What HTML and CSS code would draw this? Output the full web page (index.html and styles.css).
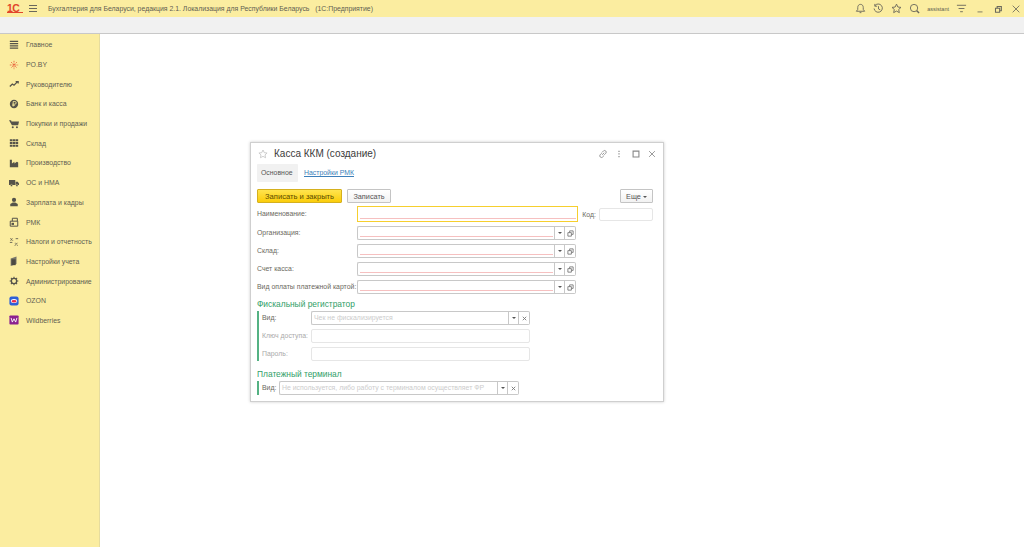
FILE: index.html
```html
<!DOCTYPE html>
<html lang="ru">
<head>
    <meta charset="UTF-8">
    <title>Бухгалтерия для Беларуси</title>
    <link rel="stylesheet" href="styles.css">
</head>
<body>
    <header class="topbar">
        <div class="logo">1С</div>
        <svg class="icon burger" viewBox="1 .5 8 7"><path d="M1 1h8M1 4h8M1 7h8"/></svg>
        <div class="app-title">Бухгалтерия для Беларуси, редакция 2.1. Локализация для Республики Беларусь&nbsp;&nbsp; (1С:Предприятие)</div>
        <div class="top-tools">
            <svg class="icon" viewBox="0 0 12 12"><path d="M6 1.5c-2 0-3 1.5-3 3.5v2l-1.500 2h9l-1.500-2v-2c0-2-1-3.500-3-3.500zM5 10.500h2"/></svg>
            <svg class="icon" viewBox="0 0 12 12"><path d="M2 3a4.500 4.500 0 1 1-.8 3M2 1v2.500h2.500M6 3.500v3l2 1"/></svg>
            <svg class="icon" viewBox="0 0 12 12"><path d="M6 1.200l1.500 3.200 3.400.4-2.500 2.300.7 3.400-3.100-1.700-3.100 1.700.7-3.400-2.500-2.300 3.400-.4z"/></svg>
            <svg class="icon" viewBox="0 0 12 12"><circle cx="5.500" cy="5.500" r="4"/><path d="M8.500 8.500l2.500 2.500" stroke-width="1.600"/></svg>
            <span class="user">assistant</span>
            <svg class="icon" viewBox="0 0 12 12"><path d="M1 2.500h10M2.800 6h6.400M4.500 9.500h3"/></svg>
            <svg class="icon small" viewBox="0 0 12 12"><path d="M3 9.500h6"/></svg>
            <svg class="icon small" viewBox="0 0 12 12"><path d="M3 5h5v5h-5zM5 5v-2h5v5h-2" stroke-width="1.300"/></svg>
            <svg class="icon small" viewBox="0 0 12 12"><path d="M2 2l8 8M10 2l-8 8"/></svg>
        </div>
    </header>
    <div class="toolbar"></div>

    <div class="layout">
        <nav class="sidebar">
            <a class="nav-item">
                <svg class="nav-icon" viewBox="0 0 12 12"><path d="M1 1h10v1.500h-10zM1 3.700h10v1.500h-10zM1 6.400h10v1.500h-10zM1 9.100h10v1.500h-10z" fill="#55534a"/></svg>
                Главное
            </a>
            <a class="nav-item">
                <svg class="nav-icon" viewBox="0 0 12 12"><path d="M6 1v10M1 6h10M2.500 2.500l7 7M9.500 2.500l-7 7" stroke="#e8613c" stroke-width="1" stroke-dasharray="2 1" fill="none"/></svg>
                PO.BY
            </a>
            <a class="nav-item">
                <svg class="nav-icon" viewBox="0 0 12 12"><path d="M1 9l3-3 2 1.500 4-4M8 3h3v2.500" stroke="#55534a" stroke-width="1.500" fill="none"/></svg>
                Руководителю
            </a>
            <a class="nav-item">
                <svg class="nav-icon" viewBox="0 0 12 12"><circle cx="6" cy="6" r="5" fill="#55534a"/><path d="M5 9v-6h2a1.500 1.500 0 0 1 0 3.200h-3M4 7.600h3" stroke="#fbeda0" fill="none"/></svg>
                Банк и касса
            </a>
            <a class="nav-item">
                <svg class="nav-icon" viewBox="0 0 12 12"><path d="M0 1.500h2.500l.5 1.500h9l-1 4.500h-7.500z" fill="#55534a"/><circle cx="4.500" cy="10" r="1.200" fill="#55534a"/><circle cx="9.500" cy="10" r="1.200" fill="#55534a"/></svg>
                Покупки и продажи
            </a>
            <a class="nav-item">
                <svg class="nav-icon" viewBox="0 0 12 12"><path d="M1 1.500h3v2.500h-3zM4.500 1.500h3v2.500h-3zM8 1.500h3v2.500h-3zM1 4.800h3v2.500h-3zM4.500 4.800h3v2.500h-3zM8 4.800h3v2.500h-3zM1 8h3v2.500h-3zM4.500 8h3v2.500h-3zM8 8h3v2.500h-3z" fill="#55534a"/></svg>
                Склад
            </a>
            <a class="nav-item">
                <svg class="nav-icon" viewBox="0 0 12 12"><path d="M1 11v-9h2.500v4.500l3-2v2l3-2 1.500 1v5.500z" fill="#55534a"/></svg>
                Производство
            </a>
            <a class="nav-item">
                <svg class="nav-icon" viewBox="0 0 12 12"><path d="M0 2.500h7.500v6h-7.500zM8 4.500h2.500l1.500 2v2h-4z" fill="#55534a"/><circle cx="3" cy="9" r="1.300" fill="#55534a" stroke="#fbeda0" stroke-width=".5"/><circle cx="9.500" cy="9" r="1.300" fill="#55534a" stroke="#fbeda0" stroke-width=".5"/></svg>
                ОС и НМА
            </a>
            <a class="nav-item">
                <svg class="nav-icon" viewBox="0 0 12 12"><circle cx="6" cy="3.500" r="2.500" fill="#55534a"/><path d="M1.500 11v-2.500l3-2h3l3 2v2.500z" fill="#55534a"/></svg>
                Зарплата и кадры
            </a>
            <a class="nav-item">
                <svg class="nav-icon" viewBox="0 0 12 12"><path d="M1.500 5h9v6h-9zM4 5v-3.500h6v3.500" stroke="#55534a" stroke-width="1.200" fill="none"/><path d="M3 7h3v2.500h-3z" fill="#55534a"/></svg>
                РМК
            </a>
            <a class="nav-item">
                <svg class="nav-icon" viewBox="0 0 12 12"><path d="M2 4.500l2-3M1.500 2h1M4 4h1M7 10.500l3-3.500M7 7.500h1M9.500 10h1M1 6.500h3M8 2h3" stroke="#55534a" stroke-width="1" fill="none"/></svg>
                Налоги и отчетность
            </a>
            <a class="nav-item">
                <svg class="nav-icon" viewBox="0 0 12 12"><path d="M2 3l7-2.500v9l-7 2.500z" fill="#77756a"/><path d="M3 4h5v7h-5z" fill="#4c4a42"/></svg>
                Настройки учета
            </a>
            <a class="nav-item">
                <svg class="nav-icon" viewBox="0 0 12 12"><circle cx="6" cy="6" r="3.200" stroke="#55534a" stroke-width="1.600" fill="none"/><path d="M6 .8v2M6 9.200v2M.8 6h2M9.200 6h2M2.300 2.300l1.400 1.400M8.300 8.300l1.400 1.400M9.700 2.300l-1.400 1.400M3.700 8.300l-1.400 1.400" stroke="#55534a" stroke-width="1.300"/></svg>
                Администрирование
            </a>
            <a class="nav-item">
                <svg class="nav-icon" viewBox="0 0 12 12"><rect x=".5" y=".5" width="11" height="11" rx="2.500" fill="#2e5fd8"/><ellipse cx="6" cy="6" rx="3.800" ry="2.400" fill="#fff"/><ellipse cx="6" cy="6.300" rx="3" ry="1.500" fill="#e8294c"/></svg>
                OZON
            </a>
            <a class="nav-item">
                <svg class="nav-icon" viewBox="0 0 12 12"><rect x=".5" y=".5" width="11" height="11" rx="1" fill="#8b1f8f"/><path d="M2.500 3.500l1.500 5 2-4 2 4 1.500-5" stroke="#fff" stroke-width="1.100" fill="none"/></svg>
                Wildberries
            </a>
        </nav>

        <main class="workspace">
            <section class="window">
                <div class="window-head">
                    <svg class="star" viewBox="0 0 12 12"><path d="M6 1.200l1.500 3.200 3.400.4-2.500 2.300.7 3.400-3.100-1.700-3.100 1.700.7-3.400-2.500-2.300 3.400-.4z"/></svg>
                    <h1 class="window-title">Касса ККМ (создание)</h1>
                    <div class="window-tools">
                        <svg viewBox="0 0 12 12"><path d="M5 7l2.500-2.500M4.500 5l-2 2a2 2 0 0 0 2.800 2.800l2-2M7.500 7l2-2a2 2 0 0 0-2.800-2.800l-2 2"/></svg>
                        <svg viewBox="0 0 12 12"><path d="M6 2v1.500M6 5.200v1.500M6 8.500v1.500" stroke-width="1.400"/></svg>
                        <svg viewBox="0 0 12 12"><path d="M2.500 2.500h7v7h-7z" stroke-width="1.300"/></svg>
                        <svg viewBox="0 0 12 12"><path d="M2.500 2.500l7 7M9.500 2.500l-7 7"/></svg>
                    </div>
                </div>

                <div class="tabs">
                    <div class="tab active">Основное</div>
                    <a class="tab link">Настройки РМК</a>
                </div>

                <div class="commands">
                    <button class="btn primary">Записать и закрыть</button>
                    <button class="btn">Записать</button>
                    <button class="btn more">Еще <span class="caret"></span></button>
                </div>

                <div class="form-row name-row">
                    <label class="label">Наименование:</label>
                    <div class="field focused required"></div>
                    <label class="code-label">Код:</label>
                    <div class="field code"></div>
                </div>
                <div class="form-row">
                    <label class="label">Организация:</label>
                    <div class="field required wide"></div>
                    <span class="field-btn"><span class="caret"></span></span>
                    <span class="field-btn"><svg class="open" viewBox="0 0 8 8"><path d="M1 3h4v4h-4zM3 3v-2h4v4h-2"/></svg></span>
                </div>
                <div class="form-row">
                    <label class="label">Склад:</label>
                    <div class="field required wide"></div>
                    <span class="field-btn"><span class="caret"></span></span>
                    <span class="field-btn"><svg class="open" viewBox="0 0 8 8"><path d="M1 3h4v4h-4zM3 3v-2h4v4h-2"/></svg></span>
                </div>
                <div class="form-row">
                    <label class="label">Счет касса:</label>
                    <div class="field required wide"></div>
                    <span class="field-btn"><span class="caret"></span></span>
                    <span class="field-btn"><svg class="open" viewBox="0 0 8 8"><path d="M1 3h4v4h-4zM3 3v-2h4v4h-2"/></svg></span>
                </div>
                <div class="form-row">
                    <label class="label">Вид оплаты платежной картой:</label>
                    <div class="field required wide"></div>
                    <span class="field-btn"><span class="caret"></span></span>
                    <span class="field-btn"><svg class="open" viewBox="0 0 8 8"><path d="M1 3h4v4h-4zM3 3v-2h4v4h-2"/></svg></span>
                </div>

                <h2 class="group-title">Фискальный регистратор</h2>
                <div class="group">
                    <div class="group-row">
                        <label class="group-label">Вид:</label>
                        <div class="field muted fiscal">Чек не фискализируется</div>
                        <span class="field-btn"><span class="caret"></span></span>
                        <span class="field-btn"><svg class="open" viewBox="0 0 8 8"><path d="M2 2l4 4M6 2l-4 4"/></svg></span>
                    </div>
                    <div class="group-row off">
                        <label class="group-label">Ключ доступа:</label>
                        <div class="field off-field"></div>
                    </div>
                    <div class="group-row off">
                        <label class="group-label">Пароль:</label>
                        <div class="field off-field"></div>
                    </div>
                </div>

                <h2 class="group-title second">Платежный терминал</h2>
                <div class="group">
                    <div class="group-row">
                        <label class="group-label short">Вид:</label>
                        <div class="field muted terminal">Не используется, либо работу с терминалом осуществляет ФР</div>
                        <span class="field-btn"><span class="caret"></span></span>
                        <span class="field-btn"><svg class="open" viewBox="0 0 8 8"><path d="M2 2l4 4M6 2l-4 4"/></svg></span>
                    </div>
                </div>
            </section>
        </main>
    </div>
</body>
</html>
```

FILE: styles.css
```css
* {
    margin: 0;
    padding: 0;
    box-sizing: border-box;
}

body {
    width: 1024px;
    height: 547px;
    overflow: hidden;
    background: white;
    color: #5f5d52;
    font-family: 'Liberation Sans', Arial, sans-serif;
    font-size: 6.9px;
}

.topbar {
    height: 17px;
    background: #fbeda0;
    display: flex;
    align-items: center;
    padding-left: 7px;
}

.logo {
    width: 16px;
    color: #e2452c;
    font-size: 10.5px;
    font-weight: bold;
    letter-spacing: -0.5px;
    border-bottom: 1px solid #e2452c;
    line-height: 8px;
}

.icon {
    width: 11px;
    height: 11px;
    fill: none;
    stroke: #6a685c;
    stroke-width: 1;
}

.burger {
    width: 8px;
    height: 7px;
    margin-left: 6px;
}

.app-title {
    margin-left: 11px;
    color: #5f5d52;
    white-space: nowrap;
}

.top-tools {
    margin-left: auto;
    display: flex;
    align-items: center;
    gap: 7px;
    padding-right: 3px;
}

.user {
    font-size: 5.5px;
}

.top-tools .small {
    width: 10px;
    height: 10px;
    margin-left: 1px;
}

.toolbar {
    height: 17px;
    background: #f1f1f1;
    border-bottom: 1px solid #c8c8c8;
}

.layout {
    display: flex;
    height: 513px;
}

.sidebar {
    width: 100px;
    background: #fbeda0;
    border-right: 1px solid #e6dc9e;
    padding-top: 1px;
}

.nav-item {
    height: 19.7px;
    display: flex;
    align-items: center;
    gap: 7px;
    padding-left: 9px;
    color: #5f5d52;
}

.nav-icon {
    width: 10px;
    height: 10px;
}

.workspace {
    flex: 1;
    padding: 108px 0 0 150px;
}

.window {
    width: 414px;
    height: 260px;
    background: white;
    border: 1px solid #cfcfcf;
    box-shadow: 0 0 3px rgba(0, 0, 0, 0.2);
    padding: 0 10px 0 6px;
}

.window-head {
    display: flex;
    align-items: center;
    height: 21px;
}

.star {
    width: 10px;
    height: 10px;
    margin-left: 1px;
    fill: none;
    stroke: #c4c4c4;
    stroke-width: 1;
}

.window-title {
    margin-left: 6px;
    font-size: 10px;
    font-weight: normal;
    color: #3b3b3b;
}

.window-tools {
    margin-left: auto;
    margin-right: -4px;
    display: flex;
    gap: 6.5px;
}

.window-tools svg {
    width: 10px;
    height: 10px;
    fill: none;
    stroke: #888;
    stroke-width: 1;
}

.tabs {
    display: flex;
    align-items: center;
    gap: 6px;
    height: 18px;
}

.tab {
    padding: 0 4px;
    height: 18px;
    line-height: 18px;
    border-radius: 1px;
}

.tab.active {
    background: #f1f1f1;
    width: 41px;
    color: #555;
}

.tab.link {
    color: #3d7fb9;
    text-decoration: underline;
    padding: 0;
}

.commands {
    display: flex;
    gap: 5px;
    margin-top: 7px;
    height: 14px;
}

.btn {
    height: 14px;
    width: 44px;
    font-family: inherit;
    font-size: 7.3px;
    color: #555;
    background: linear-gradient(#fff, #f2f2f2);
    border: 1px solid #c4c4c4;
    border-radius: 1px;
}

.btn.primary {
    width: 85px;
    font-size: 7.6px;
    background: linear-gradient(#ffe44f, #fbcd0a);
    border-color: #d5b01e;
    color: #5a4c00;
}

.btn.more {
    width: 33px;
    margin-left: auto;
}

.caret {
    display: inline-block;
    border-top: 2px solid #555;
    border-left: 2px solid transparent;
    border-right: 2px solid transparent;
    vertical-align: middle;
}

.form-row {
    display: flex;
    align-items: center;
    height: 14px;
    margin-top: 4px;
}

.name-row {
    height: 16px;
    margin-top: 3px;
}

.label {
    width: 100px;
    padding-bottom: 2px;
    color: #6b6960;
    white-space: nowrap;
}

.field {
    height: 14px;
    background: white;
    border: 1px solid #c8c8c8;
    border-radius: 2px;
    position: relative;
}

.field.required::after {
    content: "";
    position: absolute;
    left: 2px;
    right: 1px;
    bottom: 2px;
    border-bottom: 1px solid #f6c0c0;
}

.field.focused {
    width: 222px;
    height: 16px;
    border: 1.5px solid #f6cf2e;
    border-radius: 0;
}

.code-label {
    margin-left: 4px;
    width: 17px;
    color: #6b6960;
}

.field.code {
    width: 54px;
    height: 13px;
    border-color: #e6e6e6;
}

.field.wide {
    width: 197px;
    border-right: 0;
    border-radius: 2px 0 0 2px;
}

.field-btn {
    width: 11px;
    height: 14px;
    display: flex;
    align-items: center;
    justify-content: center;
    border: 1px solid #c8c8c8;
    background: white;
}

.field-btn + .field-btn {
    border-left: 0;
    border-radius: 0 2px 2px 0;
}

.open {
    width: 7px;
    height: 7px;
    fill: none;
    stroke: #777;
    stroke-width: 1;
}

.group-title {
    font-size: 8.4px;
    font-weight: normal;
    color: #2f9e68;
    margin-top: 5px;
    line-height: 11px;
}

.group-title.second {
    margin-top: 8px;
}

.group {
    border-left: 2px solid #54b283;
    margin-top: 1px;
    padding: 0 0 0 3px;
}

.group-row {
    display: flex;
    align-items: center;
    height: 14px;
}

.group-row + .group-row {
    margin-top: 4px;
}

.group-label {
    width: 49px;
    padding-bottom: 2px;
    color: #6b6960;
    white-space: nowrap;
}

.group-label.short {
    width: 17px;
}

.off .group-label {
    color: #aaa;
}

.field.muted {
    color: #ccc;
    padding-left: 2px;
    line-height: 12px;
    border-right: 0;
    border-radius: 2px 0 0 2px;
    white-space: nowrap;
    overflow: hidden;
}

.field.fiscal {
    width: 197px;
}

.field.terminal {
    width: 218px;
}

.field.off-field {
    width: 219px;
    border-color: #e6e6e6;
}
```
